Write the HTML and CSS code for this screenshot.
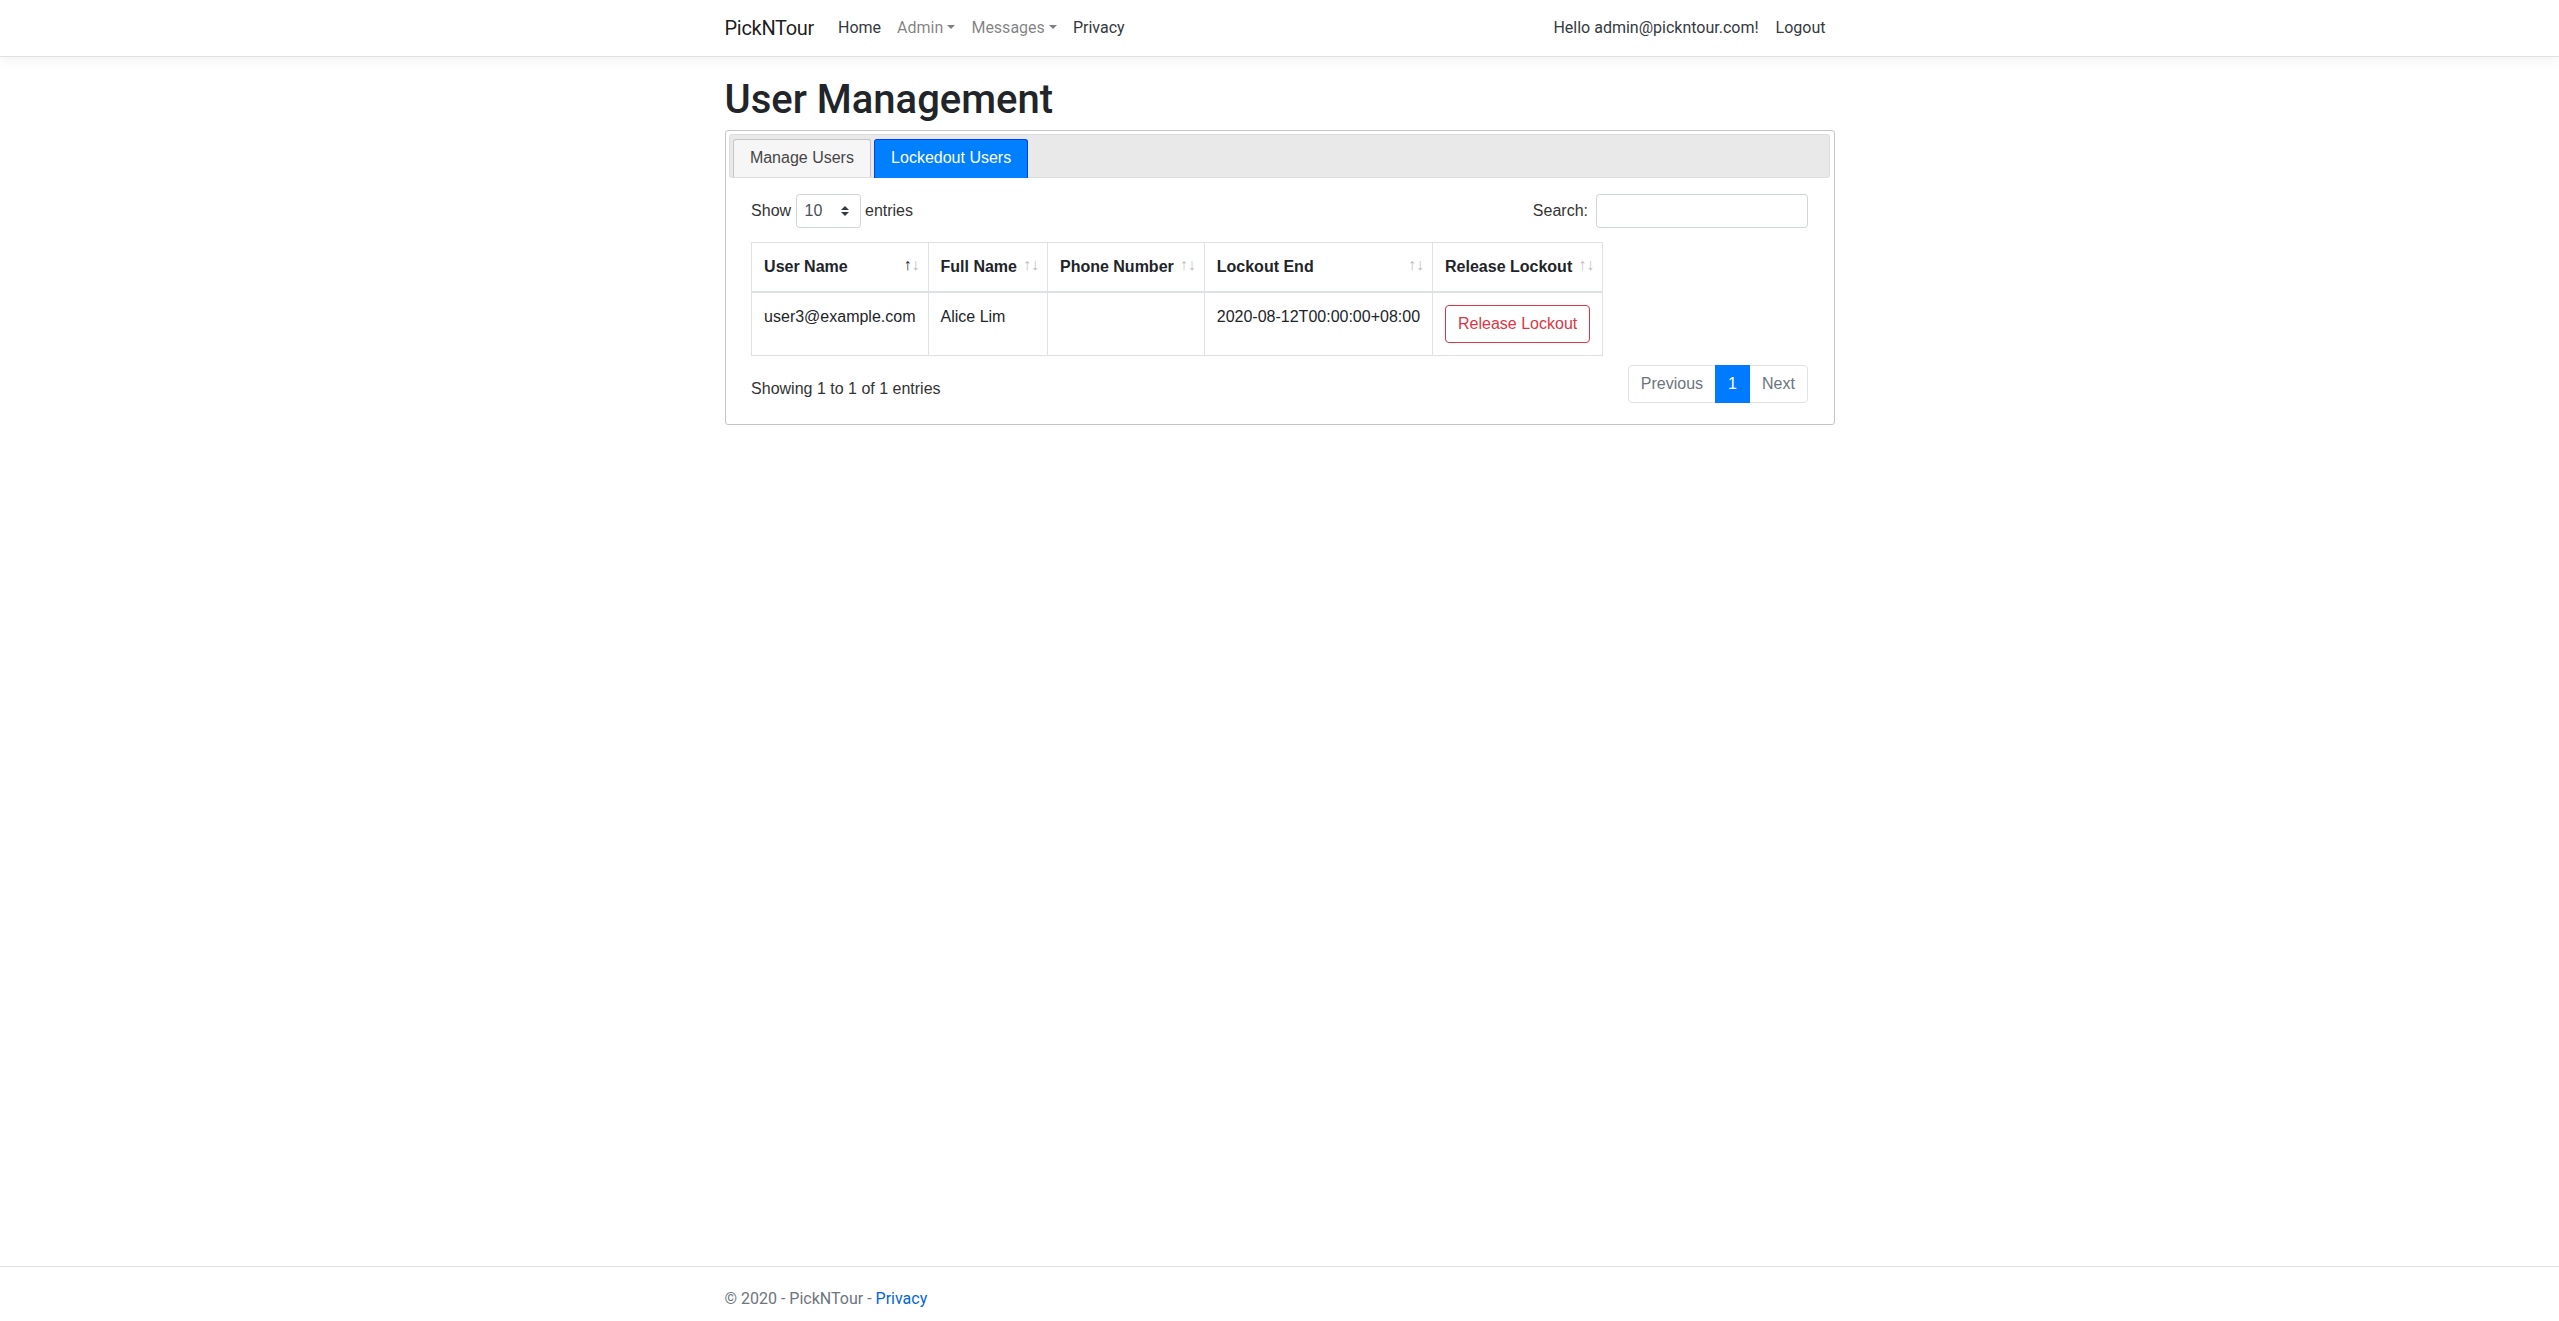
FILE: index.html
```html
<!DOCTYPE html>
<html lang="en">
<head>
<meta charset="utf-8">
<title>User Management - PickNTour</title>
<link rel="stylesheet" href="styles.css">
</head>
<body>
<header class="site-header">
  <nav class="navbar">
    <div class="container navbar-inner">
      <a class="navbar-brand" href="#">PickNTour</a>
      <ul class="nav-list nav-main">
        <li><a class="nav-link dark" href="#">Home</a></li>
        <li><a class="nav-link muted dropdown-toggle" href="#">Admin</a></li>
        <li><a class="nav-link muted dropdown-toggle" href="#">Messages</a></li>
        <li><a class="nav-link dark" href="#">Privacy</a></li>
      </ul>
      <ul class="nav-list nav-user">
        <li><a class="nav-link dark" href="#">Hello admin@pickntour.com!</a></li>
        <li><button class="nav-link dark nav-button" type="button">Logout</button></li>
      </ul>
    </div>
  </nav>
</header>

<div class="container page">
  <main class="main">
    <h1 class="page-title">User Management</h1>
    <div class="tabs">
      <ul class="tabs-nav">
        <li class="tab"><a href="#">Manage Users</a></li>
        <li class="tab tab-active"><a href="#">Lockedout Users</a></li>
      </ul>
      <div class="tab-panel">
        <div class="dt-top">
          <label class="dt-length">Show
            <span class="select-wrap">
              <select class="dt-select">
                <option>10</option>
                <option>25</option>
                <option>50</option>
                <option>100</option>
              </select>
              <svg class="select-arrow" viewBox="0 0 4 5" width="8" height="10" aria-hidden="true"><path fill="#343a40" d="M2 0L0 2h4zm0 5L0 3h4z"/></svg>
            </span>
            entries</label>
          <label class="dt-filter">Search:<input class="dt-search" type="search"></label>
        </div>
        <table class="dt-table">
          <thead>
            <tr>
              <th class="sorting sorting-asc">User Name</th>
              <th class="sorting">Full Name</th>
              <th class="sorting">Phone Number</th>
              <th class="sorting">Lockout End</th>
              <th class="sorting">Release Lockout</th>
            </tr>
          </thead>
          <tbody>
            <tr>
              <td>user3@example.com</td>
              <td>Alice Lim</td>
              <td></td>
              <td>2020-08-12T00:00:00+08:00</td>
              <td><button class="btn-release" type="button">Release Lockout</button></td>
            </tr>
          </tbody>
        </table>
        <div class="dt-bottom">
          <div class="dt-info">Showing 1 to 1 of 1 entries</div>
          <ul class="pagination">
            <li class="page-item disabled"><a class="page-link" href="#">Previous</a></li>
            <li class="page-item active"><a class="page-link" href="#">1</a></li>
            <li class="page-item disabled"><a class="page-link" href="#">Next</a></li>
          </ul>
        </div>
      </div>
    </div>
  </main>
</div>

<footer class="footer">
  <div class="container">&copy; 2020 - PickNTour - <a href="#">Privacy</a></div>
</footer>
</body>
</html>
```

FILE: styles.css
```css
* {
  box-sizing: border-box;
}

html,
body {
  margin: 0;
  padding: 0;
}

body {
  font-family: Roboto, "Noto Sans", "DejaVu Sans", sans-serif;
  font-size: 16px;
  line-height: 1.5;
  color: #212529;
  background: #fff;
  min-height: 100vh;
  display: flex;
  flex-direction: column;
}

.container {
  width: 1140px;
  padding: 0 15px;
  margin: 0 auto;
}

/* ---------- Navbar ---------- */
.site-header {
  margin-bottom: 16px;
}

.navbar {
  padding: 8px 16px;
  background: #fff;
  border-bottom: 1px solid #dee2e6;
  box-shadow: 0 4px 12px rgba(0, 0, 0, 0.05);
}

.navbar-inner {
  display: flex;
  align-items: center;
  height: 40px;
}

.navbar-brand {
  font-size: 20px;
  line-height: 30px;
  padding: 5px 0;
  margin-right: 16px;
  letter-spacing: -0.3px;
  color: rgba(0, 0, 0, 0.9);
  text-decoration: none;
  white-space: nowrap;
}

.nav-list {
  display: flex;
  align-items: center;
  list-style: none;
  margin: 0;
  padding: 0;
}

.nav-main {
  flex-grow: 1;
}

.nav-link {
  display: block;
  padding: 8px;
  font-size: 16px;
  line-height: 24px;
  text-decoration: none;
  white-space: nowrap;
}

.dark {
  color: #343a40;
}

.muted {
  color: rgba(0, 0, 0, 0.5);
}

.dropdown-toggle::after {
  content: "";
  display: inline-block;
  margin-left: 0.255em;
  vertical-align: 0.255em;
  border-top: 0.3em solid;
  border-right: 0.3em solid transparent;
  border-left: 0.3em solid transparent;
  border-bottom: 0;
}

.nav-button {
  padding: 7px 8px;
  background: none;
  border: 1px solid transparent;
  border-radius: 4px;
  font-family: inherit;
  cursor: pointer;
}

/* ---------- Page ---------- */
.page {
  flex: 1 0 auto;
}

.page-title {
  margin: 0 0 6px;
  padding-top: 3px;
  font-size: 40px;
  font-weight: 500;
  line-height: 48px;
  color: #212529;
}

/* ---------- Tabs (jQuery UI look) ---------- */
.tabs {
  border: 1px solid #c5c5c5;
  border-radius: 3px;
  padding: 3.2px;
  background: #fff;
  color: #333;
  font-family: "Liberation Sans", Arial, sans-serif;
}

.tabs-nav {
  display: flex;
  align-items: flex-start;
  list-style: none;
  margin: 0;
  padding: 3.2px 3.2px 0;
  background: #e9e9e9;
  border: 1px solid #ddd;
  border-radius: 3px;
  line-height: 1.3;
}

.tab {
  margin: 1px 3.2px 0 0;
  border: 1px solid #c5c5c5;
  border-bottom-width: 0;
  border-radius: 3px 3px 0 0;
  background: #f6f6f6;
}

.tab a {
  display: block;
  padding: 8px 16px;
  color: #454545;
  text-decoration: none;
  white-space: nowrap;
}

.tab-active {
  background: #007fff;
  border-color: #003eff;
  margin-bottom: -1px;
  padding-bottom: 1px;
}

.tab-active a {
  color: #fff;
}

.tab-panel {
  padding: 16px 22.4px;
}

/* ---------- DataTable controls ---------- */
.dt-top {
  display: flex;
  justify-content: space-between;
  align-items: center;
  padding-bottom: 8px;
}

.dt-length,
.dt-filter {
  display: flex;
  align-items: center;
  gap: 4.45px;
  line-height: 24px;
  white-space: nowrap;
  color: #333;
}

.select-wrap {
  position: relative;
  display: inline-flex;
}

.dt-select {
  -webkit-appearance: none;
  appearance: none;
  height: 34px;
  padding: 4px 28px 4px 8px;
  font-family: "Liberation Sans", Arial, sans-serif;
  font-size: 16px;
  line-height: 24px;
  color: #495057;
  background: #fff;
  border: 1px solid #ced4da;
  border-radius: 3.2px;
  margin: 0;
}

.select-arrow {
  position: absolute;
  right: 12px;
  top: 12px;
  pointer-events: none;
}

.dt-search {
  width: 212px;
  height: 34px;
  margin: 0 0 0 3.5px;
  padding: 4px 8px;
  font-family: "Liberation Sans", Arial, sans-serif;
  font-size: 16px;
  color: #495057;
  background: #fff;
  border: 1px solid #ced4da;
  border-radius: 3.2px;
}

/* ---------- Table ---------- */
.dt-table {
  border-collapse: collapse;
  margin: 6px 0 7px;
  color: #212529;
}

.dt-table th,
.dt-table td {
  border: 1px solid #dee2e6;
  padding: 12px;
  line-height: 24px;
  text-align: left;
  white-space: nowrap;
}

.dt-table th {
  vertical-align: bottom;
  border-bottom-width: 2px;
  font-weight: bold;
}

.dt-table td {
  vertical-align: top;
}

.sorting {
  position: relative;
  padding-right: 30px !important;
}

.sorting::before,
.sorting::after {
  position: absolute;
  bottom: 14.4px;
  display: block;
  opacity: 0.3;
  font-weight: normal;
}

.sorting::before {
  content: "\2191";
  right: 16px;
}

.sorting::after {
  content: "\2193";
  right: 8px;
}

.sorting-asc::before {
  opacity: 1;
}

.btn-release {
  display: inline-block;
  font-family: "Liberation Sans", Arial, sans-serif;
  font-size: 16px;
  line-height: 24px;
  padding: 6px 12px;
  color: #dc3545;
  background: transparent;
  border: 1px solid #dc3545;
  border-radius: 4px;
  cursor: pointer;
}

/* ---------- Bottom: info + pagination ---------- */
.dt-bottom {
  display: flex;
  justify-content: space-between;
  align-items: flex-start;
}

.dt-info {
  padding-top: 13.6px;
  line-height: 24px;
  white-space: nowrap;
  color: #333;
}

.pagination {
  display: flex;
  list-style: none;
  margin: 2px 0;
  padding: 0;
}

.page-link {
  position: relative;
  display: block;
  padding: 8px 12px;
  margin-left: -1px;
  line-height: 20px;
  color: #6c757d;
  background: #fff;
  border: 1px solid #dee2e6;
  text-decoration: none;
}

.page-item:first-child .page-link {
  margin-left: 0;
  border-radius: 4px 0 0 4px;
}

.page-item:last-child .page-link {
  border-radius: 0 4px 4px 0;
}

.page-item.active .page-link {
  z-index: 3;
  color: #fff;
  background: #007bff;
  border-color: #007bff;
}

/* ---------- Footer ---------- */
.footer {
  flex-shrink: 0;
  height: 55px;
  line-height: 64px;
  overflow: hidden;
  white-space: nowrap;
  border-top: 1px solid #dee2e6;
  color: #6c757d;
}

.footer a {
  color: #0366d6;
  text-decoration: none;
}
```
